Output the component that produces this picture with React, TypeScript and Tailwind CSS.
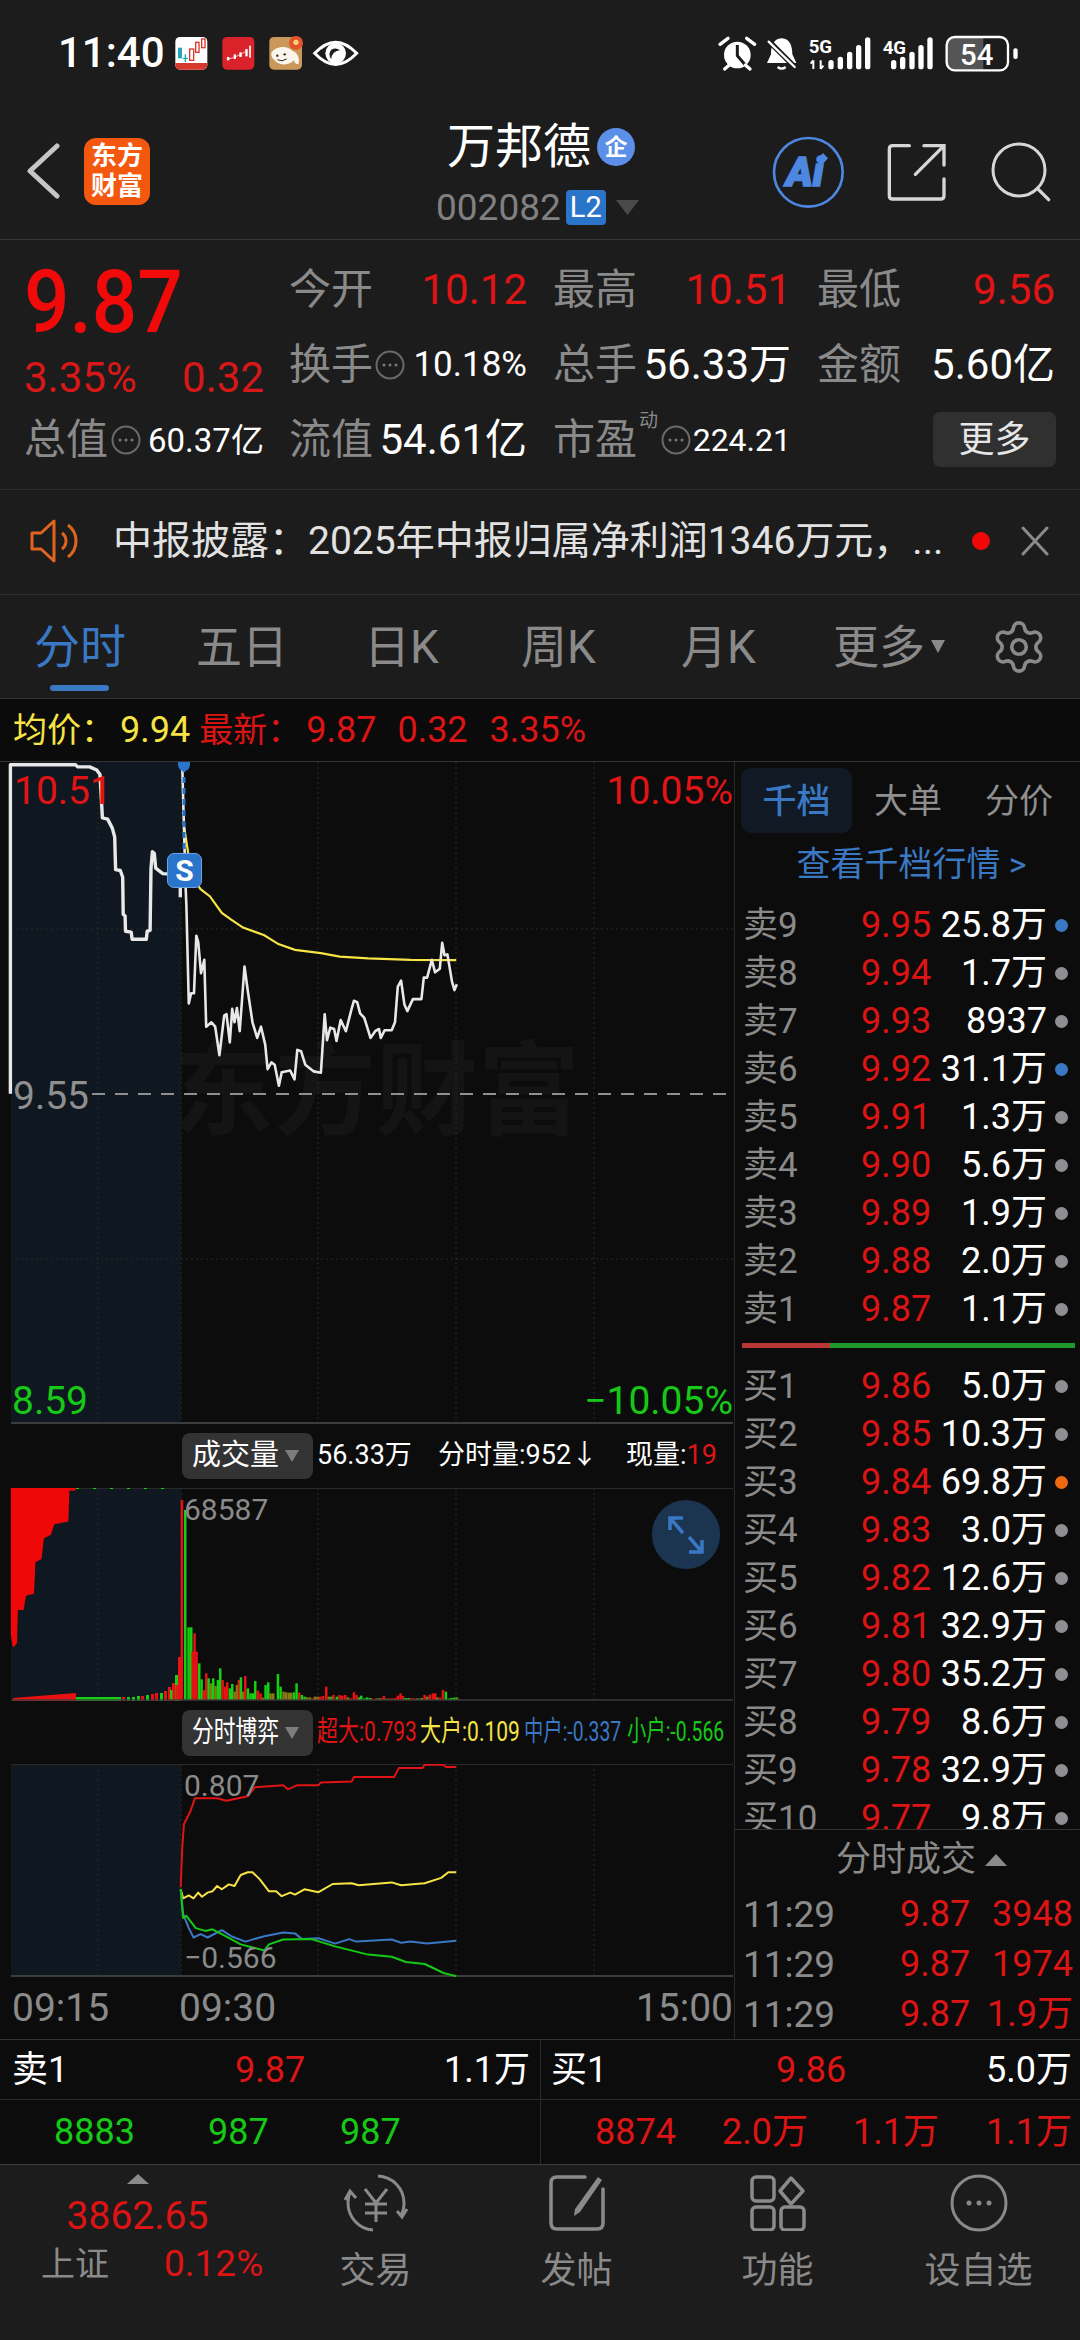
import { Settings } from "lucide-react";

type Pt = [number, number];

const GREEN = "#16c916";
const YELLOW = "#f6e445";
const BLUE = "#3a78c4";

// Plot points are kept in a 2.119x horizontal grid; each chart has its own vertical factor.
const toPoints = (pts: Pt[], sy: number, oy: number) =>
  pts.map(([x, y]) => `${(x / 2.119).toFixed(1)},${((y - oy) / sy).toFixed(1)}`).join(" ");

const preMarket: Pt[] = [
  [22, 770], [22, 33], [160, 33], [165, 38], [190, 38], [205, 45], [212, 55], [215, 115], [217, 152], [228, 155],
  [238, 175], [243, 195], [245, 268], [255, 270], [260, 285], [261, 368], [265, 372], [266, 406], [278, 408],
  [280, 424], [310, 424], [312, 406], [318, 404], [320, 265], [323, 228], [327, 232], [330, 265], [345, 277], [382, 280], [382, 330],
];

const priceLine: Pt[] = [
  [386, 30], [393, 300], [395, 350], [400, 568], [405, 545], [411, 545], [416, 416], [420, 430], [426, 500], [433, 470],
  [437, 620], [448, 610], [456, 620], [465, 684], [475, 595], [480, 592], [487, 655], [492, 580], [497, 610], [502, 578],
  [508, 630], [518, 485], [525, 540], [535, 610], [545, 645], [553, 620], [562, 660], [567, 715], [575, 700], [582, 705],
  [591, 752], [597, 722], [615, 718], [624, 738], [630, 672], [638, 675], [647, 705], [665, 720], [680, 723], [688, 592],
  [693, 650], [700, 622], [708, 625], [713, 652], [722, 605], [733, 630], [745, 580], [750, 562], [757, 565], [763, 590],
  [772, 600], [785, 645], [795, 630], [803, 625], [807, 645], [815, 628], [830, 628], [837, 610], [843, 530], [850, 517],
  [857, 570], [863, 585], [875, 558], [893, 558], [898, 510], [905, 510], [915, 470], [922, 498], [932, 490], [937, 432],
  [942, 460], [948, 458], [958, 520], [963, 538], [968, 525],
];

const avgLine: Pt[] = [
  [390, 170], [400, 240], [410, 290], [425, 312], [445, 328], [470, 365], [490, 380], [515, 398], [560, 415], [590, 435],
  [625, 448], [680, 455], [720, 463], [780, 467], [870, 470], [967, 471],
];

const superLine: Pt[] = [
  [383, 1195], [386, 1100], [390, 1040], [403, 1010], [413, 977], [460, 977], [480, 983], [525, 972], [540, 950], [600, 945],
  [610, 955], [630, 945], [675, 945], [680, 938], [745, 936], [750, 925], [835, 925], [845, 903], [895, 903], [900, 895],
  [940, 895], [945, 900], [967, 900],
];
const largeLine: Pt[] = [
  [383, 1200], [388, 1222], [400, 1215], [410, 1222], [420, 1208], [428, 1218], [440, 1208], [450, 1205], [460, 1192], [470, 1200],
  [485, 1188], [497, 1192], [510, 1165], [525, 1158], [535, 1158], [550, 1175], [570, 1205], [585, 1205], [597, 1217], [615, 1208],
  [625, 1213], [645, 1200], [675, 1207], [705, 1187], [745, 1185], [760, 1190], [830, 1183], [850, 1190], [900, 1185], [935, 1172],
  [950, 1158], [967, 1158],
];
const midLine: Pt[] = [
  [383, 1200], [388, 1260], [400, 1295], [410, 1318], [425, 1310], [440, 1318], [470, 1300], [490, 1315], [520, 1328], [560, 1315],
  [600, 1306], [625, 1308], [640, 1322], [675, 1320], [710, 1333], [740, 1322], [755, 1328], [830, 1323], [850, 1331], [870, 1328],
  [905, 1333], [967, 1326],
];
const smallLine: Pt[] = [
  [383, 1200], [388, 1270], [395, 1265], [415, 1295], [435, 1302], [450, 1298], [470, 1310], [510, 1335], [560, 1350], [570, 1335],
  [600, 1323], [660, 1322], [710, 1340], [780, 1360], [830, 1365], [860, 1378], [900, 1383], [940, 1405], [967, 1413],
];

// Opening volume block, traced as a stepped polygon.
const auctionBlock: Pt[] = [
  [23, 216], [160, 216], [160, 222], [147, 222], [145, 298], [115, 305], [108, 330], [93, 340], [88, 390], [75, 398],
  [72, 475], [55, 480], [50, 515], [38, 515], [36, 595], [30, 605], [27, 605], [23, 575],
];

const r = "#e81212";
const g = "#14d014";
const o = "#8a7a12";
// Each bar: horizontal slot, top of the bar, colour.
const volumeBars: [number, number, string][] = [
  [0, 270, g], [8, 265, r], [16, 255, r], [27, 175, r], [32, -300, r], [42, -270, g], [52, 82, g], [60, 82, g], [64, 155, r], [70, 100, r], [76, 155, r],
  [84, 190, g], [91, 238, g], [98, 270, r], [105, 220, r], [112, 235, g], [119, 250, o], [126, 235, g], [133, 258, o], [140, 240, g], [147, 205, g],
  [154, 240, r], [162, 260, r], [168, 247, r], [176, 265, g], [183, 252, g], [190, 275, o], [197, 255, o], [203, 240, r], [209, 232, g], [215, 275, o],
  [222, 228, r], [230, 265, g], [238, 280, g], [245, 280, g], [252, 243, g], [260, 272, r], [268, 280, r], [275, 293, o], [283, 255, g], [291, 247, g],
  [298, 280, o], [306, 280, o], [320, 222, g], [328, 260, g], [337, 275, o], [345, 277, o], [353, 278, o], [360, 278, o], [368, 277, g], [376, 250, g],
  [384, 278, r], [392, 285, g], [400, 290, g], [408, 292, o], [416, 292, o], [424, 295, r], [431, 290, o], [439, 290, o], [447, 290, r], [455, 288, r],
  [465, 260, r], [473, 290, o], [481, 290, g], [487, 285, r], [497, 290, g], [505, 285, r], [513, 287, r], [522, 285, r], [530, 292, o], [538, 295, r],
  [548, 277, r], [556, 285, r], [564, 292, g], [570, 287, g], [580, 295, g], [588, 292, g], [597, 294, g], [605, 296, r], [615, 295, r], [622, 295, g],
  [630, 294, r], [638, 288, r], [646, 296, g], [655, 295, r], [663, 295, r], [672, 294, r], [680, 287, r], [688, 280, r], [695, 288, r], [703, 294, g],
  [712, 294, g], [720, 295, r], [728, 295, r], [737, 295, o], [745, 296, g], [752, 294, o], [760, 285, r], [768, 290, o], [776, 284, r], [785, 280, r],
  [792, 280, r], [798, 292, o], [806, 293, r], [815, 270, r], [824, 275, g], [832, 296, g], [840, 294, g], [848, 293, g], [856, 292, g], [862, 296, r],
];

const leadInBars: [number, number, string][] = [
  [122, 4, r], [127, 4, g], [132, 4, g], [137, 5, g], [141, 5, r], [146, 6, g], [151, 7, r], [155, 8, r], [160, 8, g], [164, 10, r], [168, 14, r], [172, 18, r], [175, 26, g], [178, 44, r],
];

const asks: [string, string, string, string][] = [
  ["卖9", "9.95", "25.8万", BLUE], ["卖8", "9.94", "1.7万", "#8e8e93"], ["卖7", "9.93", "8937", "#8e8e93"],
  ["卖6", "9.92", "31.1万", BLUE], ["卖5", "9.91", "1.3万", "#8e8e93"], ["卖4", "9.90", "5.6万", "#8e8e93"],
  ["卖3", "9.89", "1.9万", "#8e8e93"], ["卖2", "9.88", "2.0万", "#8e8e93"], ["卖1", "9.87", "1.1万", "#8e8e93"],
];
const bids: [string, string, string, string][] = [
  ["买1", "9.86", "5.0万", "#8e8e93"], ["买2", "9.85", "10.3万", "#8e8e93"], ["买3", "9.84", "69.8万", "#ee6a12"],
  ["买4", "9.83", "3.0万", "#8e8e93"], ["买5", "9.82", "12.6万", "#8e8e93"], ["买6", "9.81", "32.9万", "#8e8e93"],
  ["买7", "9.80", "35.2万", "#8e8e93"], ["买8", "9.79", "8.6万", "#8e8e93"], ["买9", "9.78", "32.9万", "#8e8e93"],
  ["买10", "9.77", "9.8万", "#8e8e93"],
];

function StatusLeftIcons() {
  return (
    <svg width="200" height="55" viewBox="0 0 600 165" className="shrink-0">
      <rect x="16" y="36" width="96" height="98" rx="14" fill="#fff" />
      <path d="M16 114h96v6a14 14 0 0 1-14 14H30a14 14 0 0 1-14-14z" fill="#d8392f" />
      <rect x="24" y="68" width="12" height="32" fill="#23a9b5" />
      <path d="M46 88v24M38 100h16" stroke="#23a9b5" strokeWidth="4" />
      <rect x="59" y="72" width="12" height="34" fill="none" stroke="#d8392f" strokeWidth="4" />
      <rect x="77" y="52" width="10" height="30" fill="none" stroke="#d8392f" strokeWidth="4" />
      <rect x="95" y="42" width="10" height="26" fill="none" stroke="#d8392f" strokeWidth="4" />
      <rect x="157" y="36" width="96" height="98" rx="14" fill="#d9222a" />
      <path d="M170 103l20-5 18-8 22-12" stroke="#ffb9b9" strokeWidth="3" fill="none" />
      <rect x="171" y="96" width="7" height="10" fill="#fff" />
      <rect x="191" y="88" width="7" height="14" fill="#fff" />
      <rect x="208" y="82" width="7" height="14" fill="#fff" />
      <rect x="226" y="72" width="7" height="22" fill="#fff" />
      <rect x="237" y="62" width="6" height="36" fill="#ffdcdc" />
      <rect x="298" y="36" width="98" height="98" rx="14" fill="#c9985a" />
      <circle cx="378" cy="54" r="21" fill="#e2542a" />
      <circle cx="378" cy="52" r="8" fill="#f7d27a" />
      <path d="M304 84c10-20 46-26 64-6 14 4 22 22 18 38-8 4-12-2-14-10-12 16-44 16-56 2-8-6-14-14-12-24z" fill="#fbf6ec" />
      <circle cx="322" cy="92" r="3.5" fill="#33261a" />
      <circle cx="344" cy="88" r="3.5" fill="#33261a" />
      <path d="M322 104q14 8 28-2" stroke="#33261a" strokeWidth="3" fill="none" />
      <path d="M434 85Q497 18 560 85 497 152 434 85Z" fill="none" stroke="#fff" strokeWidth="9" />
      <circle cx="497" cy="85" r="31" fill="#fff" />
      <path d="M484 74a22 22 0 0 1 26 2 26 26 0 0 0-26 26 22 22 0 0 1 0-28z" fill="#1c1c1c" />
    </svg>
  );
}

function StatusRightIcons() {
  const bar = (x: number, top: number) => <rect key={x} x={x} y={top} width="16" height={133 - top} rx="8" fill="#fff" />;
  return (
    <svg width="320" height="55" viewBox="0 0 960 165" className="shrink-0">
      <circle cx="82" cy="90" r="40" fill="#fff" />
      <path d="M82 60v32l24 28" stroke="#1c1c1c" strokeWidth="9" fill="none" />
      <path d="M30 58l24-18M110 40l24 18M44 132l14-12M106 120l14 12" stroke="#fff" strokeWidth="10" strokeLinecap="round" />
      <path d="M215 40c-26 0-32 26-32 48l-12 26h88l-12-26c0-22-6-48-32-48z" fill="#fff" />
      <path d="M203 126q12 10 24 0" stroke="#fff" strokeWidth="7" fill="none" />
      <path d="M172 44l84 84" stroke="#1c1c1c" strokeWidth="16" />
      <path d="M176 50l78 76" stroke="#fff" strokeWidth="7" strokeLinecap="round" />
      <text x="296" y="84" fill="#fff" fontSize="56" fontWeight="700" fontFamily="Roboto">5G</text>
      <path d="M310 106v26M302 116l8-10M332 106v26M340 122l-8 10" stroke="#fff" strokeWidth="6" fill="none" />
      {[bar(355, 105), bar(383, 95), bar(411, 80), bar(438, 60), bar(465, 37)]}
      <text x="518" y="86" fill="#fff" fontSize="56" fontWeight="700" fontFamily="Roboto">4G</text>
      {[bar(543, 105), bar(570, 95), bar(598, 80), bar(625, 60), bar(652, 37)]}
      <path d="M732 38h88v96h-88a20 20 0 0 1-20-20V58a20 20 0 0 1 20-20z" fill="#555" />
      <rect x="710" y="36" width="184" height="100" rx="24" fill="none" stroke="#fff" strokeWidth="7" />
      <text x="750" y="119" fill="#fff" fontSize="88" fontWeight="500" fontFamily="Roboto">54</text>
      <rect x="910" y="70" width="13" height="32" rx="6" fill="#fff" />
    </svg>
  );
}

function HeaderActions() {
  return (
    <svg width="300" height="90" viewBox="0 0 900 270" className="shrink-0">
      <circle cx="145" cy="142" r="103" fill="none" stroke="#4d87e0" strokeWidth="8" />
      <text x="78" y="184" fill="#4d87e0" stroke="#4d87e0" strokeWidth="5" fontSize="122" fontWeight="900" fontStyle="italic" fontFamily="Roboto">Ai</text>
      <path d="M189 84l15 16-15 16-15-16z" fill="#4d87e0" />
      <path d="M448 62h-50q-10 0-10 10v140q0 10 10 10h144q10 0 10-10v-50M466 148l84-84M492 62h60v58" fill="none" stroke="#d6d6d6" strokeWidth="10" strokeLinecap="round" />
      <circle cx="777" cy="135" r="78" fill="none" stroke="#d6d6d6" strokeWidth="9" />
      <path d="M832 190l34 34" stroke="#d6d6d6" strokeWidth="10" strokeLinecap="round" />
    </svg>
  );
}

function InfoDots() {
  return (
    <svg width="30" height="30" viewBox="0 0 30 30" className="shrink-0">
      <circle cx="15" cy="15" r="13.5" fill="none" stroke="#6a6a6a" strokeWidth="2" />
      <circle cx="9" cy="15" r="1.5" fill="#7a7a7a" />
      <circle cx="15" cy="15" r="1.5" fill="#7a7a7a" />
      <circle cx="21" cy="15" r="1.5" fill="#7a7a7a" />
    </svg>
  );
}

function Stat({ label, value, tone = "text-[#e01414]" }: { label: string; value: string; tone?: string }) {
  return (
    <div className="flex w-[264px] items-center justify-between pr-[26px]">
      <span className="text-[42px] text-[#8a8a8a]">{label}</span>
      <span className={`text-[42px] whitespace-nowrap ${tone}`}>{value}</span>
    </div>
  );
}

function Grid({ h, rows }: { h: number; rows: number[] }) {
  return (
    <g stroke="#2b2b2b" strokeWidth="1" strokeDasharray="2 3">
      {[98, 181, 318, 456, 594].map((x) => (
        <line key={x} x1={x} y1="0" x2={x} y2={h} />
      ))}
      {rows.map((y) => (
        <line key={y} x1="11" y1={y} x2="733" y2={y} />
      ))}
    </g>
  );
}

function PriceChart() {
  return (
    <div className="relative h-[662px] shrink-0">
      <span className="absolute left-[172px] top-[268px] text-[102px] font-bold leading-[124px] whitespace-nowrap text-[#141414]">东方财富</span>
      <svg width="734" height="662" viewBox="0 0 734 662" className="relative block">
        <rect x="11" y="0" width="170" height="662" fill="#0f1720" />
        <Grid h={662} rows={[167, 497]} />
        <line x1="11" y1="661" x2="733" y2="661" stroke="#3c3c3c" strokeWidth="2" />
        <line x1="92" y1="332" x2="733" y2="332" stroke="#8f8f8f" strokeWidth="2" strokeDasharray="13 10" />
        <polyline points={toPoints(avgLine, 2.24, 27)} fill="none" stroke={YELLOW} strokeWidth="2.2" />
        <polyline points={toPoints(preMarket, 2.24, 27)} fill="none" stroke="#e8e8e8" strokeWidth="3.4" strokeLinejoin="round" />
        <polyline points={toPoints(priceLine, 2.24, 27)} fill="none" stroke="#e8e8e8" strokeWidth="2.6" strokeLinejoin="round" />
        <line x1="184" y1="4" x2="184" y2="92" stroke="#2a74c9" strokeWidth="3" strokeDasharray="6 5" />
        <path d="M178 0h12v3a6 6 0 0 1-12 0z" fill="#2a74c9" />
      </svg>
      <span className="absolute left-[14px] top-[7px] text-[39px] leading-[44px] text-[#e01414]">10.51</span>
      <span className="absolute right-[1px] top-[7px] text-[39px] leading-[44px] text-[#e01414]">10.05%</span>
      <span className="absolute left-[13px] top-[312px] text-[39px] leading-[44px] text-[#8f8f8f]">9.55</span>
      <span className="absolute left-[12px] top-[617px] text-[39px] leading-[44px] text-[#16c916]">8.59</span>
      <span className="absolute right-[1px] top-[617px] text-[39px] leading-[44px] whitespace-nowrap text-[#16c916]">−10.05%</span>
      <span className="absolute left-[167px] top-[91px] flex h-[35px] w-[35px] items-center justify-center rounded-[7px] border border-[#6ea4e4] bg-[#2a74c9] text-[30px] leading-none font-bold text-white">S</span>
    </div>
  );
}

function Pill({ label, narrow = false }: { label: string; narrow?: boolean }) {
  return (
    <div className="flex h-[46px] w-[131px] shrink-0 items-center rounded-[8px] bg-[#333333] pl-[10px]">
      <span className={narrow ? "inline-block w-[92px] origin-left scale-x-[.75] text-[29px] leading-none whitespace-nowrap text-white" : "inline-block w-[92px] text-[29px] leading-none whitespace-nowrap text-white"}>
        {label}
      </span>
      <svg width="14" height="12" viewBox="0 0 14 12" className="ml-[1px]">
        <path d="M0 0h14L7 12z" fill="#7d7d7d" />
      </svg>
    </div>
  );
}

function VolumeChart() {
  return (
    <div className="relative h-[213px] shrink-0">
      <svg width="734" height="213" viewBox="0 0 734 213" className="block">
        <rect x="11" y="0" width="170" height="213" fill="#0f1720" />
        <Grid h={213} rows={[]} />
        <line x1="11" y1="0" x2="733" y2="0" stroke="#2a2a2a" strokeWidth="2" />
        <polygon points={toPoints(auctionBlock, 2.45, 216)} fill="#f00808" />
        <polygon points="13,210 76,205 76,213 13,213" fill="#e81212" />
        <rect x="76" y="209" width="45" height="4" fill="#14d014" />
        <line x1="76" y1="0.5" x2="175" y2="0.5" stroke="#14d014" strokeWidth="1" strokeDasharray="3 14" />
        {leadInBars.map(([x, h, c]) => (
          <rect key={x} x={x} y={213 - h} width="3" height={h} fill={c} />
        ))}
        {volumeBars.map(([x, top, c]) => (
          <rect key={x} x={170 + x / 3} y={Math.max(112 + top / 3, 0)} width="2.5" height={212 - Math.max(112 + top / 3, 0)} fill={c} />
        ))}
        <line x1="11" y1="212" x2="733" y2="212" stroke="#3c3c3c" strokeWidth="2" opacity="0.7" />
      </svg>
      <span className="absolute left-[184px] top-[4px] text-[30px] leading-[36px] text-[#8a8a8a]">68587</span>
      <div className="absolute left-[652px] top-[12px] flex h-[69px] w-[68px] items-center justify-center rounded-full bg-[#1b3450]">
        <svg width="36" height="40" viewBox="0 0 36 40" fill="none" stroke="#3a78c4" strokeWidth="3.5">
          <path d="M2 15V3h13M2 3l13 15M34 25v12H21M34 37L21 22" />
        </svg>
      </div>
    </div>
  );
}

function FlowChart() {
  const lines: [Pt[], string][] = [
    [superLine, "#e01414"],
    [largeLine, YELLOW],
    [midLine, BLUE],
    [smallLine, GREEN],
  ];
  return (
    <div className="relative h-[213px] shrink-0">
      <svg width="734" height="213" viewBox="0 0 734 213" className="block">
        <rect x="11" y="0" width="170" height="213" fill="#0f1720" />
        <Grid h={213} rows={[]} />
        <line x1="11" y1="0" x2="733" y2="0" stroke="#2a2a2a" strokeWidth="2" />
        <line x1="11" y1="212" x2="733" y2="212" stroke="#3c3c3c" strokeWidth="2" />
        {lines.map(([pts, c]) => (
          <polyline key={c} points={toPoints(pts, 2.45, 893)} fill="none" stroke={c} strokeWidth="2" strokeLinejoin="round" />
        ))}
      </svg>
      <span className="absolute left-[184px] top-[4px] text-[30px] leading-[36px] text-[#8a8a8a]">0.807</span>
      <span className="absolute left-[184px] top-[176px] text-[30px] leading-[36px] text-[#8a8a8a]">−0.566</span>
    </div>
  );
}

function Legend({ text, tone, w, squeeze }: { text: string; tone: string; w: string; squeeze: string }) {
  return (
    <span className={`${w} shrink-0 overflow-visible`}>
      <span className={`inline-block origin-left ${squeeze} text-[28px] leading-none whitespace-nowrap ${tone}`}>{text}</span>
    </span>
  );
}

function BookRow({ row }: { row: [string, string, string, string] }) {
  return (
    <div className="flex h-[48px] shrink-0 items-center pl-[8px] text-[36px] leading-none">
      <span className="w-[118px] text-[35px] text-[#8a8a8a]">{row[0]}</span>
      <span className="w-[69px] text-right text-[#dd1414]">{row[1]}</span>
      <span className="w-[117px] text-right text-white">{row[2]}</span>
      <span className="ml-[8px] h-[13px] w-[13px] rounded-full" style={{ backgroundColor: row[3] }} />
    </div>
  );
}

function TradeRow({ vol }: { vol: string }) {
  return (
    <div className="flex h-[50px] items-center pl-[8px] text-[36px] leading-none">
      <span className="w-[157px] text-[37px] text-[#8a8a8a]">11:29</span>
      <span className="w-[69px] text-right text-[#dd1414]">9.87</span>
      <span className="w-[104px] text-right text-[#dd1414]">{vol}</span>
    </div>
  );
}

function OrderPanel() {
  return (
    <div className="flex w-[346px] shrink-0 flex-col border-l border-[#2a2a2a]">
      <div className="flex pt-[6px] pl-[6px] text-[34px] leading-none">
        <div className="flex h-[65px] w-[111px] items-center justify-center rounded-[10px] bg-[#111a24] font-medium text-[#3a78c4]">千档</div>
        <div className="flex h-[65px] w-[112px] items-center justify-center text-[#8f8f8f]">大单</div>
        <div className="flex h-[65px] w-[110px] items-center justify-center text-[#8f8f8f]">分价</div>
      </div>
      <div className="flex h-[62px] items-center justify-center pl-[8px] text-[34px] leading-none whitespace-pre text-[#3a78c4]">查看千档行情 &gt;</div>
      <div className="mt-[6px]">
        {asks.map((row) => (
          <BookRow key={row[0]} row={row} />
        ))}
      </div>
      <div className="mt-[10px] ml-[7px] flex h-[5px] w-[333px]">
        <div className="w-[88px] bg-[#b93636]" />
        <div className="flex-1 bg-[#1f9a2a]" />
      </div>
      <div className="mt-[14px] h-[467px] overflow-hidden">
        {bids.map((row) => (
          <BookRow key={row[0]} row={row} />
        ))}
      </div>
      <div className="flex h-[60px] items-center justify-center gap-[9px] border-t border-[#333] pl-[28px] text-[35px] leading-none text-[#8a8a8a]">
        <span>分时成交</span>
        <svg width="22" height="12" viewBox="0 0 22 12">
          <path d="M0 12L11 0l11 12z" fill="#8a8a8a" />
        </svg>
      </div>
      <TradeRow vol="3948" />
      <TradeRow vol="1974" />
      <TradeRow vol="1.9万" />
    </div>
  );
}

function NavItem({ label, children }: { label: string; children: React.ReactNode }) {
  return (
    <div className="flex w-[201px] flex-col items-center pt-[8px]">
      <div className="flex h-[60px] items-center justify-center">{children}</div>
      <div className="mt-[18px] text-[36px] leading-[40px] text-[#8a8a8a]">{label}</div>
    </div>
  );
}

export default function App() {
  return (
    <div className="flex h-[2340px] w-[1080px] flex-col overflow-hidden bg-[#1c1c1c] font-['Roboto','Noto_Sans_CJK_SC',sans-serif]">
      {/* system status bar */}
      <div className="flex h-[105px] shrink-0 items-center pr-[50px] pl-[58px]">
        <span className="w-[112px] text-[42px] leading-none font-medium text-white">11:40</span>
        <StatusLeftIcons />
        <div className="flex-1" />
        <StatusRightIcons />
      </div>

      {/* stock title */}
      <div className="flex h-[135px] shrink-0 border-b border-[#383838]">
        <div className="flex w-[436px] items-center pb-[2px] pl-[25px]">
          <svg width="36" height="56" viewBox="0 0 36 56">
            <path d="M32 3L5 28l27 25" fill="none" stroke="#c6c6c6" strokeWidth="5" strokeLinecap="round" strokeLinejoin="round" />
          </svg>
          <div className="ml-[23px] flex h-[67px] w-[66px] flex-col items-center justify-center rounded-[12px] bg-[#f4580f] text-[26px] leading-[30px] font-bold text-white">
            <span>东方</span>
            <span>财富</span>
          </div>
        </div>
        <div className="flex w-[210px] flex-col">
          <div className="mt-[19px] flex h-[46px] items-center pl-[11px]">
            <span className="text-[48px] leading-none text-white">万邦德</span>
            <span className="ml-[6px] flex h-[38px] w-[38px] items-center justify-center rounded-full bg-[#5b8fe8] text-[23px] leading-none font-bold text-white">企</span>
          </div>
          <div className="mt-[17px] flex h-[40px] items-center">
            <span className="text-[37px] leading-none text-[#808080]">002082</span>
            <span className="ml-[5px] flex h-[35px] w-[40px] shrink-0 items-center justify-center rounded-[4px] bg-[#2a74c9] text-[29px] leading-none text-white">L2</span>
            <svg width="23" height="15" viewBox="0 0 23 15" className="ml-[10px] shrink-0">
              <path d="M0 0h23L11.5 15z" fill="#4a4a4a" />
            </svg>
          </div>
        </div>
        <div className="ml-auto flex items-center pr-[20px] pb-[5px]">
          <HeaderActions />
        </div>
      </div>

      {/* quote summary */}
      <div className="flex h-[250px] shrink-0 border-b border-[#2c2c2c] pt-[12px]">
        <div className="flex w-[289px] shrink-0 flex-col pl-[24px]">
          <div className="h-[100px] origin-left scale-x-[.91] text-[88px] leading-[100px] font-medium text-[#f00a0a]">9.87</div>
          <div className="flex h-[52px] w-[240px] items-center justify-between text-[42px] leading-none text-[#d81818]">
            <span>3.35%</span>
            <span>0.32</span>
          </div>
          <div className="flex h-[72px] items-center text-[#8a8a8a]">
            <span className="text-[42px] leading-none">总值</span>
            <span className="ml-[3px]">
              <InfoDots />
            </span>
            <span className="ml-[7px] text-[33px] leading-none whitespace-nowrap text-white">60.37亿</span>
          </div>
        </div>
        <div className="flex flex-1 flex-col leading-none">
          <div className="flex h-[75px] items-center">
            <Stat label="今开" value="10.12" />
            <Stat label="最高" value="10.51" />
            <Stat label="最低" value="9.56" />
          </div>
          <div className="flex h-[75px] items-center">
            <div className="flex w-[264px] items-center pr-[26px]">
              <span className="text-[42px] text-[#8a8a8a]">换手</span>
              <span className="ml-[2px]">
                <InfoDots />
              </span>
              <span className="ml-auto text-[35px] text-white">10.18%</span>
            </div>
            <div className="flex w-[264px] items-center justify-between pr-[26px]">
              <span className="text-[42px] text-[#8a8a8a]">总手</span>
              <span className="text-[42px] whitespace-nowrap text-white">56.33万</span>
            </div>
            <Stat label="金额" value="5.60亿" tone="text-white" />
          </div>
          <div className="flex h-[75px] items-center">
            <div className="flex w-[264px] items-center justify-between pr-[26px]">
              <span className="text-[42px] text-[#8a8a8a]">流值</span>
              <span className="text-[42px] whitespace-nowrap text-white">54.61亿</span>
            </div>
            <div className="flex w-[264px] items-center pr-[26px]">
              <span className="text-[42px] text-[#8a8a8a]">市盈</span>
              <span className="mb-[38px] ml-[2px] text-[19px] text-[#8a8a8a]">动</span>
              <span className="ml-[3px]">
                <InfoDots />
              </span>
              <span className="ml-auto text-[32px] text-white">224.21</span>
            </div>
            <div className="ml-[116px] flex h-[55px] w-[123px] items-center justify-center rounded-[7px] bg-[#303030] text-[36px] text-[#e6e6e6]">更多</div>
          </div>
        </div>
      </div>

      {/* announcement ticker */}
      <div className="flex h-[105px] shrink-0 items-center border-b border-[#2f2f2f] pb-[2px] pl-[30px]">
        <svg width="52" height="44" viewBox="0 0 52 44" fill="none" stroke="#e0641e" strokeWidth="3" className="shrink-0">
          <path d="M2 14h9L24 2v40L11 30H2zM32 14a10 10 0 0 1 0 16M38 6a20 20 0 0 1 0 32" strokeLinejoin="round" />
        </svg>
        <span className="ml-[31px] w-[859px] shrink-0 text-[39px] leading-none whitespace-nowrap text-[#e2e2e2]">中报披露：2025年中报归属净利润1346万元，...</span>
        <span className="h-[18px] w-[18px] shrink-0 rounded-full bg-[#f00808]" />
        <svg width="30" height="30" viewBox="0 0 30 30" className="ml-[30px] shrink-0">
          <path d="M3 2l24 26M27 2L3 28" stroke="#8a8a8a" strokeWidth="3" strokeLinecap="round" />
        </svg>
      </div>

      {/* period tabs */}
      <div className="flex h-[104px] shrink-0 items-center border-b border-[#333] text-[46px] leading-none text-[#8a8a8a]">
        <div className="relative ml-[34px] w-[162px] text-[#3a78c4]">
          分时
          <span className="absolute top-[61px] left-[16px] h-[6px] w-[59px] rounded-full bg-[#3a78c4]" />
        </div>
        <div className="w-[168px]">五日</div>
        <div className="w-[157px]">日K</div>
        <div className="w-[160px]">周K</div>
        <div className="w-[152px]">月K</div>
        <div className="flex w-[157px] items-center">
          更多
          <svg width="14" height="15" viewBox="0 0 14 15" className="ml-[6px]">
            <path d="M0 1h14L7 14z" fill="#8a8a8a" />
          </svg>
        </div>
        <Settings size={58} strokeWidth={1.5} color="#8a8a8a" className="shrink-0" />
      </div>

      {/* current tick readout */}
      <div className="flex h-[63px] shrink-0 items-center border-b border-[#333] bg-[#0b0b0b] pb-[1px] pl-[13px] leading-none whitespace-nowrap">
        <span className="text-[34px] text-[#f6e445]">均价：</span>
        <span className="ml-[5px] text-[36px] text-[#f6e445]">9.94</span>
        <span className="ml-[9px] text-[34px] text-[#dd1414]">最新：</span>
        <span className="ml-[5px] text-[36px] text-[#dd1414]">9.87</span>
        <span className="ml-[21px] text-[36px] text-[#dd1414]">0.32</span>
        <span className="ml-[22px] text-[36px] text-[#dd1414]">3.35%</span>
      </div>

      {/* charts and order book */}
      <div className="flex h-[1277px] shrink-0 bg-[#0c0c0c]">
        <div className="flex w-[734px] shrink-0 flex-col">
          <PriceChart />
          <div className="flex h-[64px] shrink-0 items-center pb-[1px] pl-[182px] text-[27px] leading-none whitespace-nowrap text-white">
            <Pill label="成交量" />
            <span className="ml-[4px] w-[121px]">56.33万</span>
            <span className="w-[188px]">分时量:952↓</span>
            <span>现量:</span>
            <span className="text-[#dd1414]">19</span>
          </div>
          <VolumeChart />
          <div className="flex h-[63px] shrink-0 items-center pl-[182px]">
            <Pill label="分时博弈" narrow />
            <span className="w-[4px]" />
            <Legend text="超大:0.793" tone="text-[#e01414]" w="w-[103px]" squeeze="scale-x-[.75]" />
            <Legend text="大户:0.109" tone="text-[#f6e445]" w="w-[104px]" squeeze="scale-x-[.75]" />
            <Legend text="中户:-0.337" tone="text-[#3a78c4]" w="w-[103px]" squeeze="scale-x-[.69]" />
            <Legend text="小户:-0.566" tone="text-[#16c916]" w="w-[100px]" squeeze="scale-x-[.69]" />
          </div>
          <FlowChart />
          <div className="flex h-[62px] shrink-0 items-center pr-[1px] pl-[12px] text-[39px] leading-none text-[#8a8a8a]">
            <span className="w-[167px]">09:15</span>
            <span>09:30</span>
            <span className="ml-auto">15:00</span>
          </div>
        </div>
        <OrderPanel />
      </div>

      {/* best bid and ask strip */}
      <div className="flex h-[125px] shrink-0 flex-col border-t border-[#333] bg-[#0c0c0c] text-[36px] leading-none">
        <div className="flex h-[60px] shrink-0 border-b border-[#2b2b2b]">
          <div className="flex w-[541px] items-center border-r border-[#2b2b2b] pr-[10px] pl-[12px]">
            <span className="w-[223px] text-white">卖1</span>
            <span className="w-[69px] text-[#dd1414]">9.87</span>
            <span className="ml-auto text-white">1.1万</span>
          </div>
          <div className="flex flex-1 items-center pr-[8px] pl-[10px]">
            <span className="w-[225px] text-white">买1</span>
            <span className="w-[69px] text-[#dd1414]">9.86</span>
            <span className="ml-auto text-white">5.0万</span>
          </div>
        </div>
        <div className="flex flex-1">
          <div className="flex w-[541px] items-center border-r border-[#2b2b2b] pl-[54px] text-[#16c916]">
            <span className="w-[154px]">8883</span>
            <span className="w-[132px]">987</span>
            <span>987</span>
          </div>
          <div className="flex flex-1 items-center text-right text-[#dd1414]">
            <span className="w-[135px]">8874</span>
            <span className="w-[132px]">2.0万</span>
            <span className="w-[131px]">1.1万</span>
            <span className="w-[133px]">1.1万</span>
          </div>
        </div>
      </div>

      {/* bottom navigation */}
      <div className="flex flex-1 border-t border-[#3a3a3a] bg-[#1c1c1c]">
        <div className="flex w-[275px] shrink-0 flex-col items-center pt-[9px]">
          <svg width="22" height="10" viewBox="0 0 22 10">
            <path d="M0 10L11 0l11 10z" fill="#8a8a8a" />
          </svg>
          <div className="mt-[9px] text-[39px] leading-[46px] text-[#dd1414]">3862.65</div>
          <div className="mt-[2px] flex w-full items-center pl-[41px]">
            <span className="w-[123px] text-[34px] leading-[46px] text-[#8a8a8a]">上证</span>
            <span className="text-[37px] leading-[46px] text-[#dd1414]">0.12%</span>
          </div>
        </div>
        <NavItem label="交易">
          <svg width="66" height="60" viewBox="0 0 66 60" fill="none" stroke="#8a8a8a" strokeWidth="3">
            <path d="M35 3a27 27 0 0 1 26 27c0 5-1 9-3 12M30 57A27 27 0 0 1 5 30c0-4 1-8 2-11" />
            <path d="M2 27l5-9 6 7M64 36l-5 8-5-6" />
            <path d="M22 16l11 14 11-14M33 30v19M22 31h22M22 40h22" />
          </svg>
        </NavItem>
        <NavItem label="发帖">
          <svg width="58" height="58" viewBox="0 0 58 58" fill="none" stroke="#8a8a8a" strokeWidth="3.5">
            <path d="M37 3H9Q3 3 3 9v40q0 6 6 6h40q6 0 6-6V15" strokeLinecap="round" />
            <path d="M50 3l4 3-22 32-6 4 1-7z" fill="#8a8a8a" stroke="none" />
          </svg>
        </NavItem>
        <NavItem label="功能">
          <svg width="56" height="56" viewBox="0 0 56 56" fill="none" stroke="#8a8a8a" strokeWidth="3.5">
            <rect x="2" y="2" width="22" height="24" rx="4" />
            <rect x="2" y="32" width="22" height="23" rx="4" />
            <rect x="31" y="32" width="23" height="23" rx="4" />
            <path d="M41 3l12 13-12 13-11-13z" strokeLinejoin="round" />
          </svg>
        </NavItem>
        <NavItem label="设自选">
          <svg width="58" height="58" viewBox="0 0 58 58" fill="none">
            <circle cx="29" cy="29" r="27" stroke="#8a8a8a" strokeWidth="3" />
            <circle cx="19" cy="29" r="2.5" fill="#8a8a8a" />
            <circle cx="29" cy="29" r="2.5" fill="#8a8a8a" />
            <circle cx="39" cy="29" r="2.5" fill="#8a8a8a" />
          </svg>
        </NavItem>
      </div>
    </div>
  );
}
